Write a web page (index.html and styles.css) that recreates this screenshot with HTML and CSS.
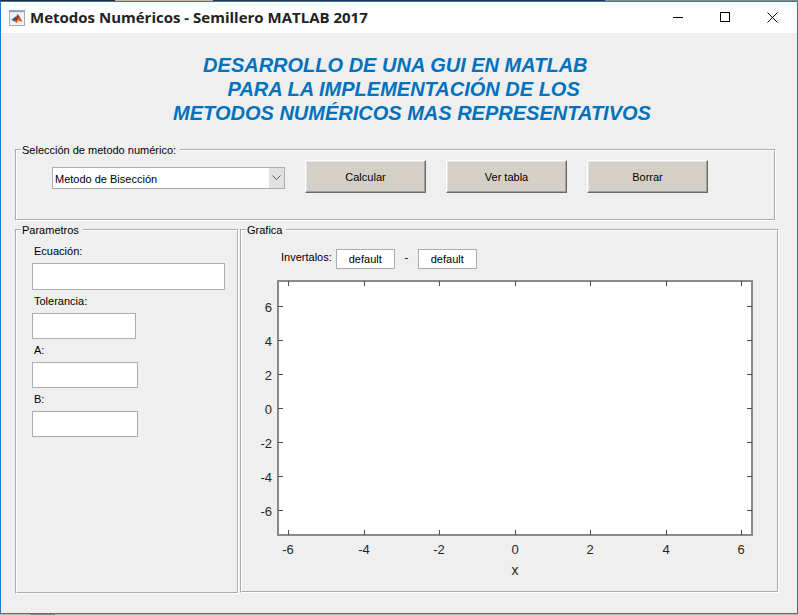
FILE: index.html
```html
<!DOCTYPE html>
<html lang="es">
<head>
<meta charset="utf-8">
<title>Metodos Numéricos - Semillero MATLAB 2017</title>
<link rel="stylesheet" href="styles.css">
</head>
<body>
<div class="window">
  <header class="titlebar">
    <svg class="app-icon" width="16" height="16" viewBox="0 0 16 16" aria-hidden="true">
      <rect x="0.5" y="0.5" width="15" height="15" fill="#f1f3f5" stroke="#a3abb3"/>
      <rect x="0" y="0" width="16" height="2" fill="#8ba9c6"/>
      <rect x="1" y="2" width="14" height="1" fill="#d3e2ef"/>
      <path d="M2 9.500 L5 8 L8 5 L7.500 9 L5 11.500 Z" fill="#4a86bd"/>
      <path d="M5 8 L6.500 7 L7 9 L5 11.500 L4 10.500 Z" fill="#2c5784"/>
      <path d="M9 4 L7.500 7.500 L5.500 11 L7.500 13 L9.500 10.500 L13.500 12 L11 7 Z" fill="#d9541e"/>
      <path d="M9 4 L7.500 7.500 L6 10.500 L8 10 L9.500 7 Z" fill="#8c2b16"/>
      <path d="M9.500 6 L9 9.500 L7.500 12.500 L9.500 10.500 Z" fill="#f2a03c"/>
    </svg>
    <h1 class="title">Metodos Numéricos - Semillero MATLAB 2017</h1>
    <div class="controls">
      <button type="button" aria-label="Minimizar"><svg width="11" height="11" viewBox="0 0 11 11"><path d="M0 5.500H10"/></svg></button>
      <button type="button" aria-label="Maximizar"><svg width="11" height="11" viewBox="0 0 11 11"><rect x="0.5" y="0.5" width="9" height="9"/></svg></button>
      <button type="button" aria-label="Cerrar"><svg width="11" height="11" viewBox="0 0 11 11"><path d="M0.500 0.500L10.500 10.500M10.500 0.500L0.500 10.500"/></svg></button>
    </div>
  </header>
  <main class="content">
    <h2 class="heading">DESARROLLO DE UNA GUI EN MATLAB      
PARA LA IMPLEMENTACIÓN DE LOS   
METODOS NUMÉRICOS MAS REPRESENTATIVOS</h2>
    <fieldset class="panel selection">
      <legend>Selección de metodo numérico:</legend>
      <div class="toolbar">
        <div class="dropdown">
          <select aria-label="Metodo numérico"><option>Metodo de Bisección</option></select>
          <span class="arrow"><svg width="9" height="6" viewBox="0 0 9 6"><path d="M0.500 0.500L4.500 4.500L8.500 0.500"/></svg></span>
        </div>
        <button class="action" type="button">Calcular</button>
        <button class="action" type="button">Ver tabla</button>
        <button class="action" type="button">Borrar</button>
      </div>
    </fieldset>
    <div class="columns">
      <fieldset class="panel parameters">
        <legend>Parametros</legend>
        <div class="fields">
          <label for="eq">Ecuación:</label><input id="eq" class="wide" type="text">
          <label for="tol">Tolerancia:</label><input id="tol" class="narrow" type="text">
          <label for="a">A:</label><input id="a" type="text">
          <label for="b">B:</label><input id="b" type="text">
        </div>
      </fieldset>
      <fieldset class="panel graph">
        <legend>Grafica</legend>
        <div class="interval">
          <label for="from">Invertalos:</label>
          <input id="from" type="text" value="default">
          <span class="dash">-</span>
          <input id="to" type="text" value="default" aria-label="Fin del intervalo">
        </div>
        <svg class="plot" viewBox="0 0 535 305" role="img" aria-label="Ejes x">
          <rect class="axes" x="36" y="4" width="474" height="254"/>
          <path class="ticks" d="M46.500 258v-5M122.500 258v-5M197.500 258v-5M273.500 258v-5M348.500 258v-5M424.500 258v-5M499.500 258v-5M46.500 4v5M122.500 4v5M197.500 4v5M273.500 4v5M348.500 4v5M424.500 4v5M499.500 4v5"/>
          <path class="ticks" d="M36 29.500h5M36 63.500h5M36 97.500h5M36 131.500h5M36 165.500h5M36 199.500h5M36 233.500h5M510 29.500h-5M510 63.500h-5M510 97.500h-5M510 131.500h-5M510 165.500h-5M510 199.500h-5M510 233.500h-5"/>
          <g class="y-labels">
            <text x="30" y="35">6</text><text x="30" y="69">4</text><text x="30" y="103">2</text><text x="30" y="137">0</text><text x="30" y="171">-2</text><text x="30" y="205">-4</text><text x="30" y="239">-6</text>
          </g>
          <g class="x-labels">
            <text x="46" y="277">-6</text><text x="122" y="277">-4</text><text x="197" y="277">-2</text><text x="273" y="277">0</text><text x="348" y="277">2</text><text x="424" y="277">4</text><text x="499" y="277">6</text>
            <text class="axis-name" x="273" y="298">x</text>
          </g>
        </svg>
      </fieldset>
    </div>
  </main>
</div>
</body>
</html>
```
FILE: styles.css
```css
* { box-sizing: border-box; }

body {
  margin: 0;
  min-height: 100vh;
  padding: 1px 0;
  display: flex;
  flex-direction: column;
  font: 11px/14px "Liberation Sans", Arial, sans-serif;
  color: #000;
  background:
    linear-gradient(90deg, #12304d 0 115px, #b9b9b9 115px 213px, #1d3a5c 213px 320px, #0d3d70 320px 605px, #7b8da1 605px) top / 100% 1px no-repeat,
    linear-gradient(90deg, #b4bac0 0 30px, #7d858d 30px 55px, #b4bac0 55px) bottom / 100% 1px no-repeat,
    #b4bac0;
}

button, input, select { font: inherit; color: inherit; margin: 0; border-radius: 0; }

.window {
  flex: 1;
  display: flex;
  flex-direction: column;
  border: 1px solid #1c7dd0;
  background: #efefef;
}

.titlebar {
  display: flex;
  align-items: center;
  height: 31px;
  padding: 0 1px 0 8px;
  background: #fff;
}

.title {
  flex: 1;
  margin: 0 0 2px 5px;
  font: bold 15px/20px "Open Sans", "Noto Sans", sans-serif;
  color: #222;
  white-space: nowrap;
}

.controls { display: flex; }

.controls button {
  width: 47px;
  height: 31px;
  padding: 0;
  display: flex;
  align-items: center;
  justify-content: center;
  border: 0;
  background: none;
}

.controls svg { fill: none; stroke: #000; }

.content {
  flex: 1;
  display: flex;
  flex-direction: column;
  padding: 20px 18px 19px 14px;
}

.heading {
  margin: 0 0 18px 30px;
  font: italic bold 20px/24px "Liberation Sans", Arial, sans-serif;
  text-align: center;
  white-space: pre;
  color: #0072bd;
}

.panel {
  min-width: 0;
  margin: 0;
  padding: 0 0 0 4px;
  border: 2px groove #fff;
}

.panel legend { padding: 0 4px 0 1px; }

.selection { margin-right: 3px; height: 78px; }

.toolbar {
  display: flex;
  align-items: center;
  gap: 20px;
  padding: 3px 0 0 31px;
}

.dropdown {
  display: flex;
  width: 233px;
  height: 22px;
  margin-top: 3px;
  border: 1px solid #abadb3;
  background: #fff;
}

.dropdown select {
  flex: 1;
  padding: 1px 2px 0;
  border: 0;
  background: none;
  appearance: none;
}

.arrow {
  display: flex;
  align-items: center;
  justify-content: center;
  width: 15px;
  background: #e1e1e1;
}

.arrow svg { fill: none; stroke: #505050; }

.action {
  width: 121px;
  height: 33px;
  padding: 0;
  border: 1px solid;
  border-color: #fff #696969 #696969 #fff;
  box-shadow: inset -1px -1px #a0a0a0, inset 1px 1px #e3e3e3;
  background: #d4d0c8;
}

.columns { flex: 1; display: flex; gap: 1px; margin-top: 2px; }

.parameters { width: 224px; }

.fields {
  display: flex;
  flex-direction: column;
  align-items: flex-start;
  padding: 7px 0 0 11px;
}

.fields label { margin: 0 0 5px 2px; }

.fields input {
  width: 106px;
  height: 26px;
  margin-bottom: 4px;
}

.fields .wide { width: 193px; height: 27px; }

.fields .narrow { width: 104px; }

.panel input {
  border: 1px solid #abadb3;
  background: #fff;
}

.graph { flex: 1; padding: 0; margin-bottom: 1px; }

.graph legend { margin-left: 4px; }

.interval {
  display: flex;
  align-items: center;
  padding: 12px 0 8px 39px;
}

.interval label { margin-right: 4px; padding-bottom: 4px; }

.interval input { width: 59px; height: 20px; padding: 0; text-align: center; }

.dash { width: 23px; text-align: center; padding-bottom: 4px; }

.plot { display: block; width: 100%; height: auto; }

.axes { fill: #fff; stroke: #8a8a8a; stroke-width: 2px; }

.ticks { fill: none; stroke: #4a4a4a; }

.plot text { font-size: 13px; fill: #262626; }

.y-labels { text-anchor: end; }

.x-labels { text-anchor: middle; }

.plot .axis-name { font-size: 14px; }
```
